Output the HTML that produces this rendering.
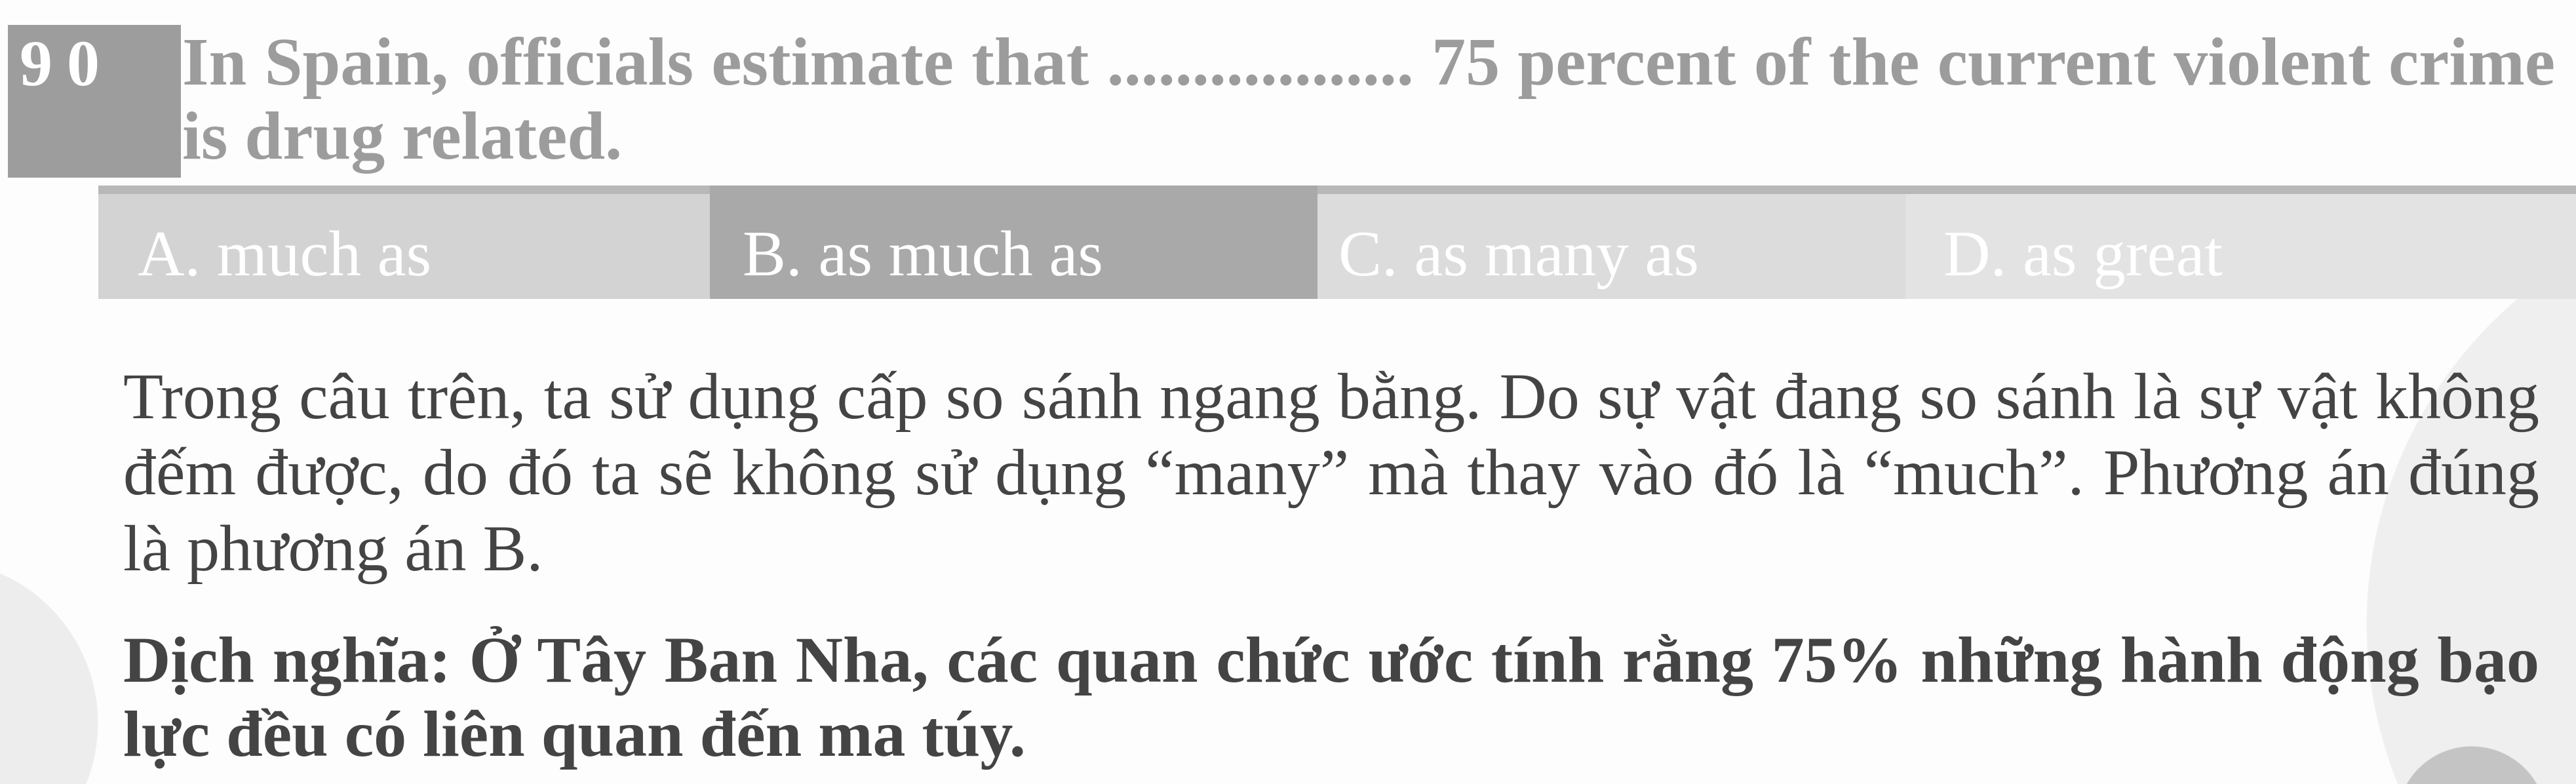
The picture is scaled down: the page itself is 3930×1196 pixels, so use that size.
<!DOCTYPE html>
<html><head><meta charset="utf-8"><style>
html,body{margin:0;padding:0;width:3930px;height:1196px;overflow:hidden}
body{position:relative;font-family:"Liberation Serif",serif;
background:
radial-gradient(circle 115px at 3771px 1253px,#c4c4c4 99%,transparent 100%),
radial-gradient(circle 650px at 4260px 952px,#efefef 99.8%,transparent 100%),
radial-gradient(circle 250px at -100px 1103px,#ededed 99.5%,transparent 100%),
#fdfdfd}
.abs{position:absolute}
.q{left:278px;width:3620px;font-weight:bold;font-size:104px;line-height:113px;color:#9c9c9c;text-align:justify;text-align-last:left}
.opt{top:283px;height:173px;}
.ot{position:absolute;top:331px;font-size:99px;line-height:113px;color:#fff;white-space:nowrap}
.ex{left:188px;width:3686px;font-size:100px;line-height:116px;color:#444;text-align:justify}
.bd{font-weight:bold;line-height:113px}
</style></head><body>
<div class="abs" style="left:12px;top:38px;width:264px;height:233px;background:#9d9d9d"></div>
<div class="abs" style="left:30px;top:40px;font-size:100px;line-height:113px;font-weight:bold;color:#fff;letter-spacing:22px">90</div>
<div class="abs q" style="top:38px">In Spain, officials estimate that .................. 75 percent of the current violent crime is drug related.</div>

<div class="abs" style="left:150px;top:283px;width:3780px;height:13px;background:#b8b8b8"></div>
<div class="abs opt" style="left:150px;width:933px;background:#d3d3d3;top:296px;height:160px"></div>
<div class="abs opt" style="left:1083px;width:927px;background:#a9a9a9"></div>
<div class="abs opt" style="left:2010px;width:897px;background:#dcdcdc;top:296px;height:160px"></div>
<div class="abs opt" style="left:2907px;width:1023px;background:#e3e3e3;top:296px;height:160px"></div>
<div class="ot" style="left:210px">A. much as</div>
<div class="ot" style="left:1133px">B. as much as</div>
<div class="ot" style="left:2042px">C. as many as</div>
<div class="ot" style="left:2965px">D. as great</div>

<div class="abs ex" style="top:547px">Trong câu trên, ta sử dụng cấp so sánh ngang bằng. Do sự vật đang so sánh là sự vật không đếm được, do đó ta sẽ không sử dụng “many” mà thay vào đó là “much”. Phương án đúng là phương án B.</div>
<div class="abs ex bd" style="top:950px">Dịch nghĩa: Ở Tây Ban Nha, các quan chức ước tính rằng 75% những hành động bạo lực đều có liên quan đến ma túy.</div>
</body></html>
